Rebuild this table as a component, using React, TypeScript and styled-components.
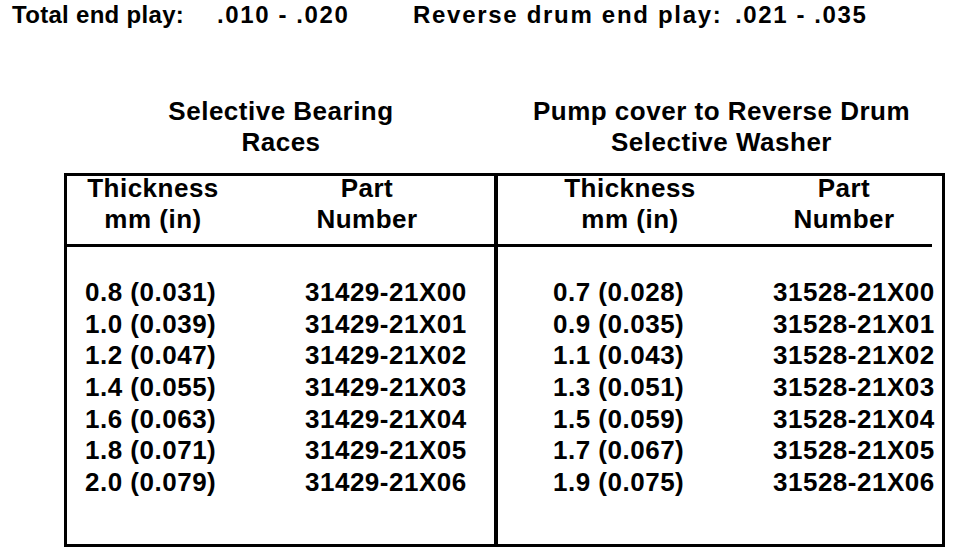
import React from "react";
import styled, { createGlobalStyle } from "styled-components";

const GlobalStyle = createGlobalStyle`
  html, body {
    margin: 0;
    padding: 0;
    background: #ffffff;
  }
  body {
    font-family: "Liberation Sans", Arial, Helvetica, sans-serif;
    color: #000000;
  }
`;

const Page = styled.div`
  width: 960px;
  height: 556px;
  overflow: hidden;
  background: #ffffff;
  font-weight: 700;
  white-space: nowrap;
`;

const EndPlayBar = styled.div`
  display: grid;
  grid-template-columns: 205px 196px 322px auto;
  padding-left: 12px;
  font-size: 24px;
  line-height: 30px;
`;

const EndLabel = styled.span<{ $ls: number }>`
  letter-spacing: ${(p) => p.$ls}px;
`;

const EndValue = styled.span`
  letter-spacing: 1.6px;
`;

const TitleRow = styled.div`
  display: grid;
  grid-template-columns: 434px 447px;
  margin: 66px 0 0 64px;
`;

const Title = styled.div`
  text-align: center;
  font-size: 26px;
  line-height: 31px;
  letter-spacing: 0.5px;
`;

const TableBox = styled.div`
  box-sizing: border-box;
  display: grid;
  grid-template-columns: 431px 444px;
  width: 881px;
  height: 374px;
  margin: 15px 0 0 64px;
  border: 3px solid #000000;
`;

const Panel = styled.section<{ $divider?: boolean }>`
  display: flex;
  flex-direction: column;
  border-right: ${(p) => (p.$divider ? "4px solid #000000" : "none")};
`;

const PanelHeader = styled.div<{ $pad: number; $trim: number }>`
  box-sizing: border-box;
  display: grid;
  grid-template-columns: 136px 146px;
  column-gap: 73px;
  align-content: start;
  height: 71px;
  padding-left: ${(p) => p.$pad}px;
  margin-right: ${(p) => p.$trim}px;
  border-bottom: 3px solid #000000;
`;

const HeaderCell = styled.div`
  display: flex;
  flex-direction: column;
  align-items: center;
  margin-top: -3px;
  font-size: 26px;
  line-height: 31px;
  letter-spacing: 0.5px;
`;

const HeaderLine = styled.span``;

const PanelBody = styled.div<{ $pad: number }>`
  display: grid;
  grid-template-columns: 220px auto;
  grid-auto-rows: 31.7px;
  padding: 30px 0 0 ${(p) => p.$pad}px;
  font-size: 26px;
  line-height: 31.7px;
  letter-spacing: 0.5px;
`;

const DataCell = styled.div``;

type Row = [string, string];

const bearingRows: Row[] = [
  ["0.8 (0.031)", "31429-21X00"],
  ["1.0 (0.039)", "31429-21X01"],
  ["1.2 (0.047)", "31429-21X02"],
  ["1.4 (0.055)", "31429-21X03"],
  ["1.6 (0.063)", "31429-21X04"],
  ["1.8 (0.071)", "31429-21X05"],
  ["2.0 (0.079)", "31429-21X06"],
];

const washerRows: Row[] = [
  ["0.7 (0.028)", "31528-21X00"],
  ["0.9 (0.035)", "31528-21X01"],
  ["1.1 (0.043)", "31528-21X02"],
  ["1.3 (0.051)", "31528-21X03"],
  ["1.5 (0.059)", "31528-21X04"],
  ["1.7 (0.067)", "31528-21X05"],
  ["1.9 (0.075)", "31528-21X06"],
];

function TablePanel({
  rows,
  headPad,
  bodyPad,
  trim,
  divider,
}: {
  rows: Row[];
  headPad: number;
  bodyPad: number;
  trim: number;
  divider?: boolean;
}) {
  return (
    <Panel $divider={divider}>
      <PanelHeader $pad={headPad} $trim={trim}>
        <HeaderCell>
          <HeaderLine>Thickness</HeaderLine>
          <HeaderLine>mm (in)</HeaderLine>
        </HeaderCell>
        <HeaderCell>
          <HeaderLine>Part</HeaderLine>
          <HeaderLine>Number</HeaderLine>
        </HeaderCell>
      </PanelHeader>
      <PanelBody $pad={bodyPad}>
        {rows.map(([t, p]) => (
          <React.Fragment key={p}>
            <DataCell>{t}</DataCell>
            <DataCell>{p}</DataCell>
          </React.Fragment>
        ))}
      </PanelBody>
    </Panel>
  );
}

export default function App() {
  return (
    <>
      <GlobalStyle />
      <Page>
        <EndPlayBar>
          <EndLabel $ls={0.3}>Total end play:</EndLabel>
          <EndValue>.010 - .020</EndValue>
          <EndLabel $ls={1.7}>Reverse drum end play:</EndLabel>
          <EndValue>.021 - .035</EndValue>
        </EndPlayBar>
        <TitleRow>
          <Title>
            Selective Bearing
            <br />
            Races
          </Title>
          <Title>
            Pump cover to Reverse Drum
            <br />
            Selective Washer
          </Title>
        </TitleRow>
        <TableBox>
          <TablePanel rows={bearingRows} headPad={18} bodyPad={18} trim={0} divider />
          <TablePanel rows={washerRows} headPad={64} bodyPad={55} trim={10} />
        </TableBox>
      </Page>
    </>
  );
}
